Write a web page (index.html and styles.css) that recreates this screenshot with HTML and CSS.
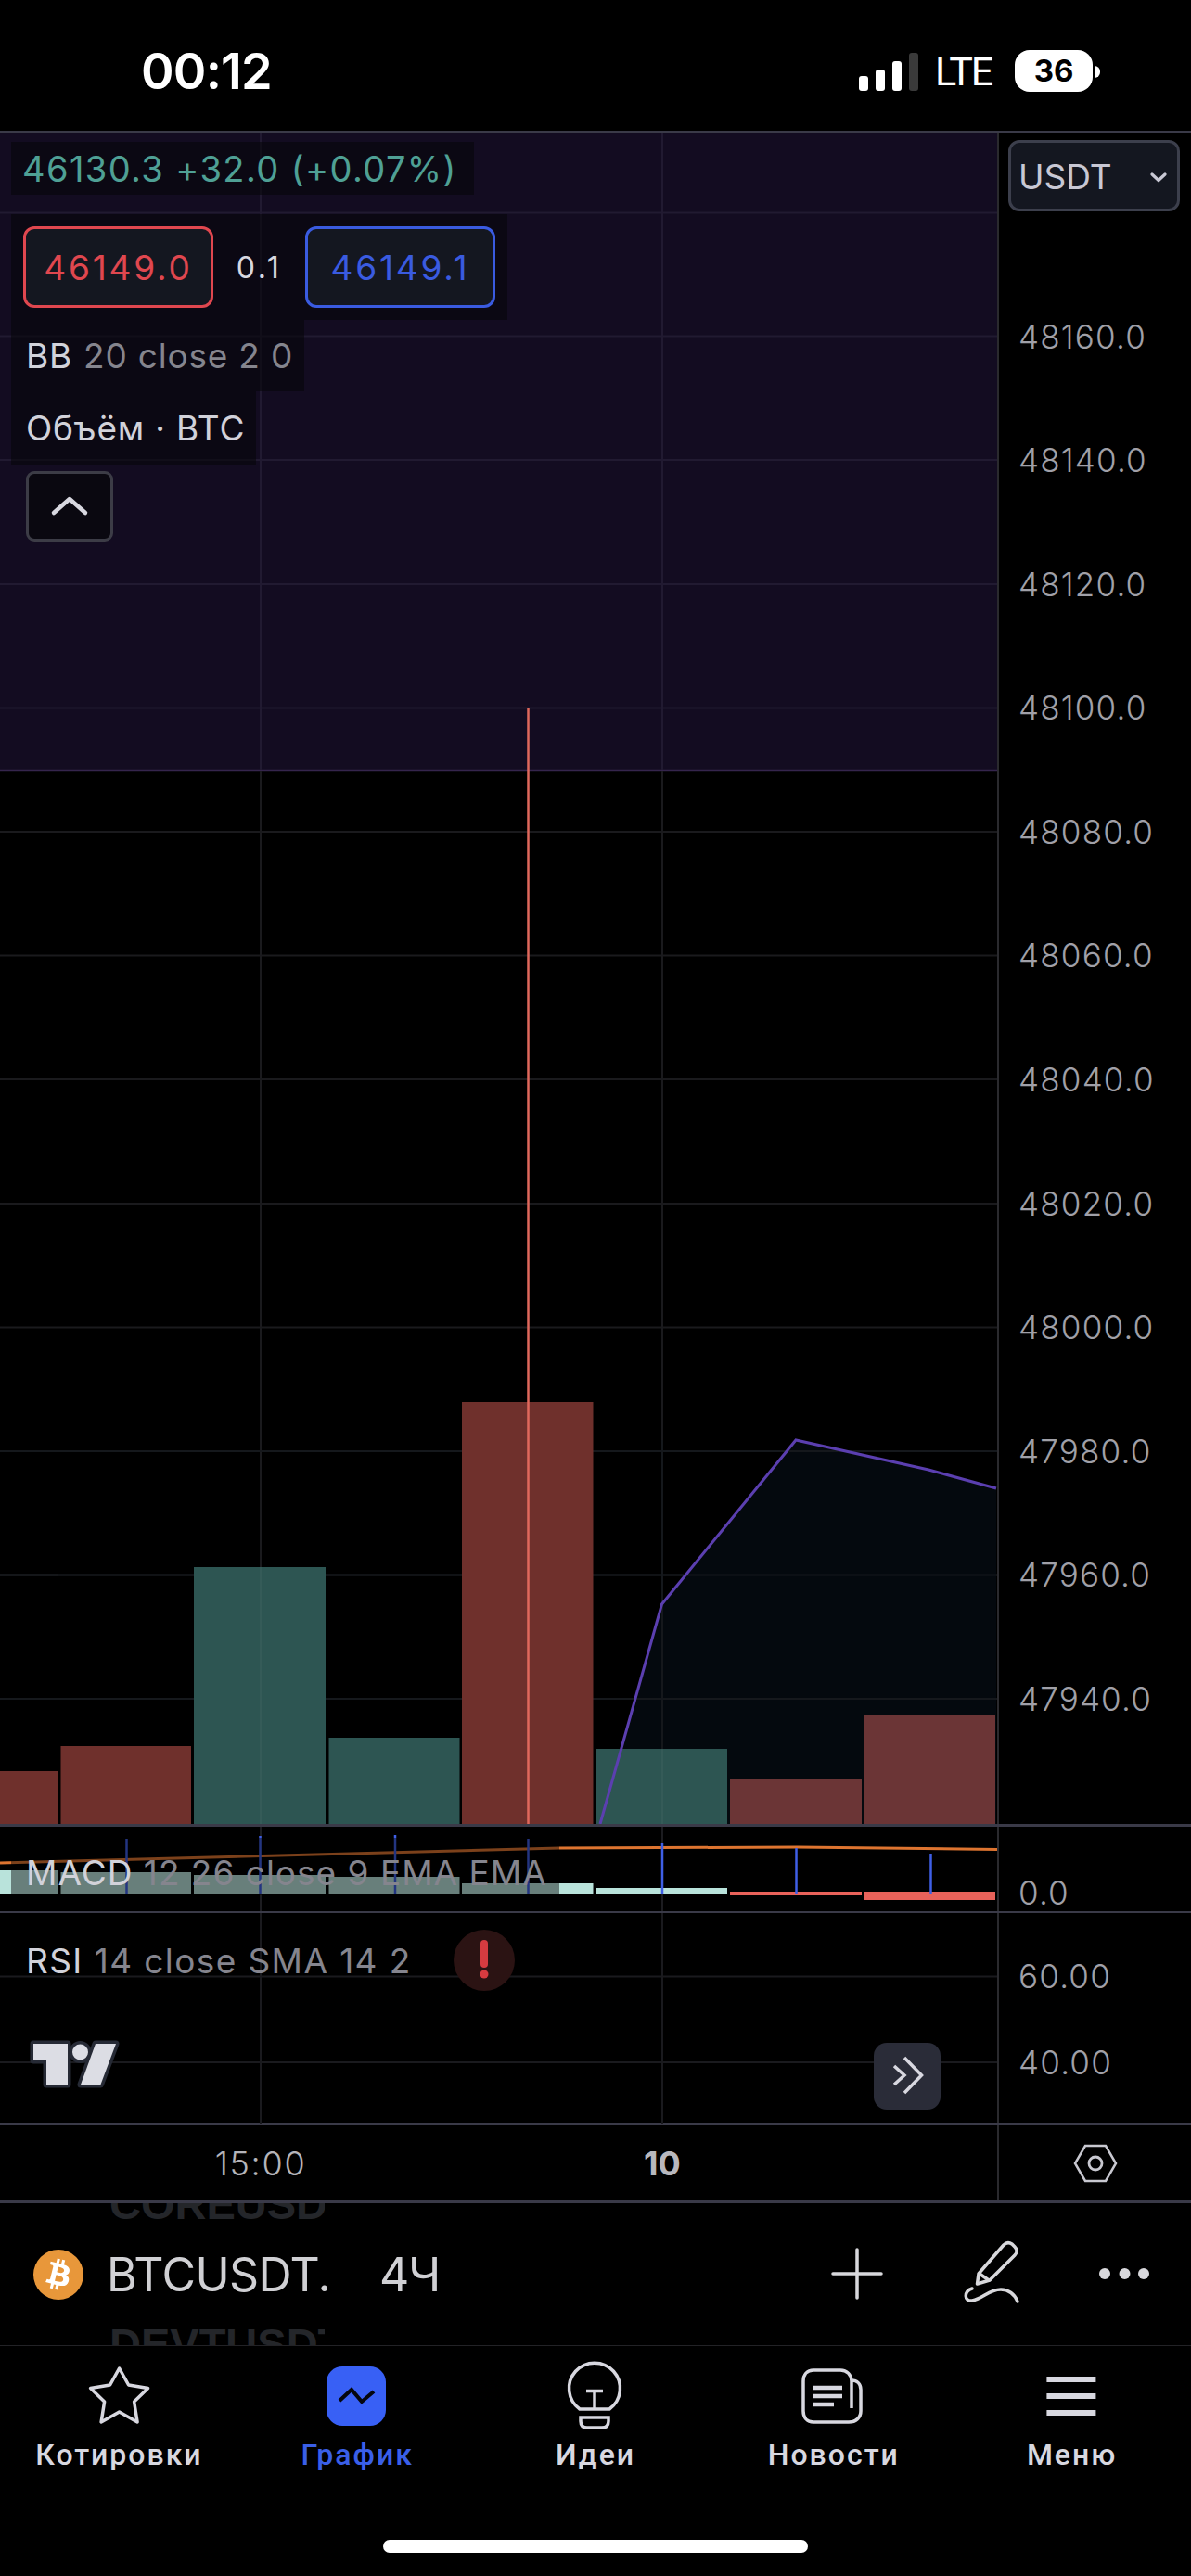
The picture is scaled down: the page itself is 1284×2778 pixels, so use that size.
FILE: index.html
```html
<!DOCTYPE html>
<html lang="ru">
<head>
<meta charset="utf-8">
<title>BTCUSDT</title>
<link rel="stylesheet" href="styles.css">
</head>
<body>
<div class="app">
  <header class="status">
    <span class="clock">00:12</span>
    <div class="status-right">
      <svg class="signal" viewBox="925 50 66 50" width="66" height="50">
        <rect x="926" y="80" width="10" height="16" rx="3" fill="#fff"/>
        <rect x="944" y="73" width="10" height="23" rx="3" fill="#fff"/>
        <rect x="962" y="64" width="10" height="32" rx="3" fill="#fff"/>
        <rect x="980" y="55" width="10" height="41" rx="3" fill="#3a3a3a"/>
      </svg>
      <span class="lte">LTE</span>
      <span class="battery">36</span>
      <span class="nub"></span>
    </div>
  </header>

  <section class="row row-main">
    <div class="pane pane-main">
      <svg class="canvas" viewBox="0 143 1075 1824" width="1075" height="1824">
        <rect x="0" y="143" width="1075" height="688" fill="#130c21"/>
        <path d="M0 830.5H1075" stroke="#35254d" stroke-width="1.5"/>
        <g class="grid-purple">
          <path d="M0 229.5H1075M0 362.5H1075M0 496H1075M0 630H1075M0 763.5H1075M281 143V830M714 143V830"/>
        </g>
        <g class="grid-dark">
          <path d="M0 897H1075M0 1030.5H1075M0 1164H1075M0 1298H1075M0 1431.5H1075M0 1565H1075M0 1698.5H1075M0 1832H1075M281 831V1967M714 831V1967"/>
        </g>
        <polygon points="647,1967 713.5,1730 858,1553 1001,1585 1074,1605 1074,1967" fill="#04090e"/>
        <path d="M0 1565H1075M0 1698.5H1075M0 1832H1075M714 1553V1967" stroke="#15181c" stroke-width="2" fill="none"/>
        <g class="bars-red">
          <rect x="0" y="1910" width="62" height="57"/>
          <rect x="65.5" y="1883" width="140.5" height="84"/>
          <rect x="498" y="1512" width="141.5" height="455"/>
        </g>
        <g class="bars-teal">
          <rect x="209" y="1690" width="142" height="277"/>
          <rect x="354.5" y="1874" width="141" height="93"/>
          <rect x="643" y="1886" width="141" height="81"/>
        </g>
        <g class="bars-maroon">
          <rect x="787" y="1918" width="142" height="49"/>
          <rect x="932" y="1849" width="141" height="118"/>
        </g>
        <path d="M569.5 763V1967" stroke="#e0685c" stroke-width="2.5"/>
        <path d="M281 1690V1967M714 1886V1967M0 1698.5H62" stroke="#ffffff" stroke-opacity=".04" stroke-width="2" fill="none"/>
        <polyline points="647,1967 713.5,1730 858,1553 1001,1585 1074,1605" fill="none" stroke="#5b3fb0" stroke-width="3"/>
      </svg>
      <div class="legend">
        <div class="leg-row leg-price"><span class="teal">46130.3 +32.0 (+0.07%)</span></div>
        <div class="leg-row leg-quotes">
          <span class="quote quote-sell">46149.0</span>
          <span class="spread">0.1</span>
          <span class="quote quote-buy">46149.1</span>
        </div>
        <div class="leg-row leg-bb"><span class="name">BB</span> <span class="args">20 close 2 0</span></div>
        <div class="leg-row leg-vol"><span class="name">Объём · BTC</span></div>
        <button class="collapse" type="button">
          <svg viewBox="0 0 46 24" width="46" height="24"><path d="M6 19L23 4L40 19" fill="none" stroke="#d8d8e0" stroke-width="4.5" stroke-linecap="round" stroke-linejoin="round"/></svg>
        </button>
      </div>
    </div>
    <aside class="axis axis-main">
      <div class="currency">
        <span>USDT</span>
        <svg viewBox="0 0 18 12" width="18" height="12"><path d="M2 3L9 9.5L16 3" fill="none" stroke="#c8c8d4" stroke-width="3.2" stroke-linecap="round" stroke-linejoin="round"/></svg>
      </div>
      <ul class="ticks">
        <li>48160.0</li><li>48140.0</li><li>48120.0</li><li>48100.0</li><li>48080.0</li>
        <li>48060.0</li><li>48040.0</li><li>48020.0</li><li>48000.0</li><li>47980.0</li>
        <li>47960.0</li><li>47940.0</li>
      </ul>
    </aside>
  </section>

  <section class="row row-macd">
    <div class="pane pane-macd">
      <svg class="canvas" viewBox="0 1970 1075 91" width="1075" height="91">
        <path d="M281 1970V2061M714 1970V2061" stroke="#1c1c20" stroke-width="2"/>
        <polyline points="0,2009 603,1993 860,1992 1075,1994.5" fill="none" stroke="#dd7430" stroke-width="3"/>
        <g fill="#b9e3db">
          <rect x="0" y="2017" width="62" height="26"/>
          <rect x="65.5" y="2019" width="140.5" height="24"/>
          <rect x="209" y="2022" width="142" height="21"/>
          <rect x="354.5" y="2024" width="141" height="19"/>
          <rect x="498" y="2031" width="141.5" height="12"/>
          <rect x="643" y="2036" width="141" height="7"/>
        </g>
        <g fill="#e8625a">
          <rect x="787" y="2040" width="142" height="4"/>
          <rect x="932" y="2040" width="141" height="9"/>
        </g>
        <path d="M136.5 1983V2043M280.5 1980V2043M426 1979V2043M569.5 1983V2043M714 1987V2043M858.5 1993V2043M1003.5 1999V2043" stroke="#3f5fe6" stroke-width="2.5"/>
      </svg>
      <div class="legend-macd"><span class="name">MACD</span> <span class="args">12 26 close 9 EMA EMA</span></div>
    </div>
    <aside class="axis axis-macd"><span class="tick-one">0.0</span></aside>
  </section>

  <section class="row row-rsi">
    <div class="pane pane-rsi">
      <svg class="canvas" viewBox="0 2063 1075 228" width="1075" height="228">
        <path d="M0 2131.5H1075M0 2224H1075M281 2063V2291M714 2063V2291" stroke="#1a1a1e" stroke-width="2"/>
      </svg>
      <div class="legend-rsi">
        <span class="name">RSI</span> <span class="args">14 close SMA 14 2</span>
        <span class="alert">
          <svg viewBox="0 0 66 66" width="66" height="66"><circle cx="33" cy="33" r="33" fill="#2b1313"/><path d="M33 15V37" stroke="#d63b40" stroke-width="8" stroke-linecap="round"/><circle cx="33" cy="48" r="4.5" fill="#d63b40"/></svg>
        </span>
      </div>
      <svg class="tv-logo" viewBox="30 2197 102 58" width="102" height="58">
        <g fill="#dcdde4" stroke="#262a35" stroke-width="7" paint-order="stroke" stroke-linejoin="round">
          <path d="M36 2204H73V2248H50V2222H36Z"/>
          <circle cx="86.5" cy="2213" r="8.5"/>
          <path d="M103 2204H125L108.5 2248H87Z"/>
        </g>
      </svg>
      <button class="scroll-btn" type="button">
        <svg viewBox="0 0 72 72" width="72" height="72"><path d="M33 16L51.5 35L33 54M22 25L33 35L22 45" fill="none" stroke="#d8d8e0" stroke-width="3.5"/></svg>
      </button>
    </div>
    <aside class="axis axis-rsi"><span class="tick-rsi">60.00</span><span class="tick-rsi">40.00</span></aside>
  </section>

  <section class="row row-time">
    <div class="pane pane-time"><span class="time time-a">15:00</span><span class="time time-b">10</span></div>
    <aside class="axis axis-time">
      <svg viewBox="0 0 48 42" width="48" height="42"><polygon points="13,2 35,2 46,21 35,40 13,40 2,21" fill="none" stroke="#c8c8d0" stroke-width="2.5"/><circle cx="24" cy="21" r="7" fill="none" stroke="#c8c8d0" stroke-width="2.8"/></svg>
    </aside>
  </section>

  <section class="symbol-bar">
    <span class="ghost ghost-top">COREUSD</span>
    <span class="ghost ghost-bottom">DEVTUSDT</span>
    <svg class="coin" viewBox="0 0 24 24" width="54" height="54">
      <circle cx="12" cy="12" r="12" fill="#e8973a"/>
      <path fill="#fff" fill-rule="evenodd" d="M17.288 10.291c.24-1.59-.974-2.45-2.64-3.03l.54-2.153-1.315-.33-.525 2.107c-.345-.087-.705-.167-1.064-.25l.526-2.127-1.32-.33-.54 2.165c-.285-.067-.565-.132-.84-.2l-1.815-.45-.35 1.407s.975.225.955.236c.535.136.63.486.615.766l-1.477 5.92c-.075.166-.24.406-.614.314.015.02-.96-.24-.96-.24l-.66 1.51 1.71.426.93.242-.54 2.19 1.32.327.54-2.17c.36.1.705.19 1.05.273l-.51 2.154 1.32.33.545-2.19c2.24.427 3.93.257 4.64-1.774.57-1.637-.03-2.58-1.217-3.196.854-.193 1.5-.76 1.68-1.93h.01zm-3.01 4.22c-.404 1.64-3.157.75-4.05.53l.72-2.9c.896.23 3.757.67 3.33 2.37zm.41-4.24c-.37 1.49-2.662.735-3.405.55l.654-2.64c.744.18 3.137.524 2.75 2.084v.006z"/>
    </svg>
    <span class="symbol">BTCUSDT.</span>
    <span class="interval">4Ч</span>
    <div class="actions">
      <svg viewBox="890 2412 68 80" width="68" height="80"><path d="M924 2425V2477M898 2451H950" stroke="#d8d8dc" stroke-width="3.5" stroke-linecap="round"/></svg>
      <svg viewBox="1030 2412 80 80" width="80" height="80">
        <g fill="none" stroke="#d8d8dc" stroke-width="3.5" stroke-linecap="round" stroke-linejoin="round">
          <path d="M1053.5 2462L1055 2451L1082 2420C1085 2417 1088 2417 1091 2419L1094 2422C1097 2425 1097 2428 1094 2431L1067 2458Z"/>
          <path d="M1056 2451L1066 2458"/>
          <path d="M1048 2467C1039 2470 1039 2481 1048 2480C1060 2478 1066 2468 1079 2468C1087 2468 1094 2473 1097 2481"/>
        </g>
      </svg>
      <svg viewBox="1180 2412 65 80" width="65" height="80"><g fill="#d8d8dc"><circle cx="1191" cy="2451" r="6"/><circle cx="1212.5" cy="2451" r="6"/><circle cx="1233" cy="2451" r="6"/></g></svg>
    </div>
  </section>

  <nav class="tabs">
    <a class="tab">
      <svg viewBox="88.4 2545 80 72" width="80" height="72"><polygon points="129,2554 139,2572 160,2575.5 145,2590 148.5,2612 129,2601 109.5,2612 113,2590 98,2575.5 119,2572" fill="none" stroke="#d8d8e0" stroke-width="3.5" stroke-linejoin="round"/></svg>
      <span>Котировки</span>
    </a>
    <a class="tab tab-active">
      <svg viewBox="345 2545 80 72" width="80" height="72"><rect x="352" y="2552" width="64" height="64" rx="17" fill="#3860f5"/><path d="M366 2589L379 2577L390 2590L403 2579" fill="none" stroke="#05070f" stroke-width="4"/></svg>
      <span>График</span>
    </a>
    <a class="tab">
      <svg viewBox="602 2545 80 72" width="80" height="72">
        <g fill="none" stroke="#d8d8e0" stroke-width="3.5">
          <path d="M625 2598A27.5 27.5 0 1 1 657 2598Z"/>
          <path d="M632 2578.5H650M641 2578.5V2598"/>
          <path d="M626 2607H656V2611C656 2616 653 2618 649 2618H633C629 2618 626 2616 626 2611Z"/>
        </g>
      </svg>
      <span>Идеи</span>
    </a>
    <a class="tab">
      <svg viewBox="859 2545 80 72" width="80" height="72">
        <g fill="none" stroke="#d8d8e0" stroke-width="3.5">
          <path d="M918 2597V2568C918 2561 913 2556 906 2556H877C870 2556 866 2561 866 2568V2600C866 2607 870 2612 877 2612H915C923 2612 928 2607 928 2600V2577C928 2571 924 2567 918 2567"/>
        </g>
        <path d="M877 2575H908M877 2584H908M877 2593H899" stroke="#d8d8e0" stroke-width="4.5"/>
      </svg>
      <span>Новости</span>
    </a>
    <a class="tab">
      <svg viewBox="1115.6 2545 80 72" width="80" height="72"><path d="M1128 2566H1181M1128 2584H1181M1128 2602H1181" stroke="#d8d8e0" stroke-width="6"/></svg>
      <span>Меню</span>
    </a>
  </nav>
  <div class="home-wrap"><span class="home"></span></div>
</div>
</body>
</html>
```

FILE: styles.css
```css
* { box-sizing: border-box; }
html, body { margin: 0; padding: 0; background: #000; }
body { font-family: Inter, "Noto Sans", sans-serif; color: #d8d8e0; }
ul { list-style: none; margin: 0; padding: 0; }
button { padding: 0; margin: 0; font: inherit; cursor: pointer; }
svg { display: block; }

.app { width: 1284px; height: 2778px; background: #000; overflow: hidden; display: flex; flex-direction: column; }

/* status bar */
.status { height: 141px; padding: 12px 106px 0 152px; display: flex; align-items: center; justify-content: space-between; }
.clock { font-size: 54px; font-weight: 600; color: #fff; letter-spacing: -.8px; line-height: 60px; }
.status-right { display: flex; align-items: center; position: relative; }
.signal { margin-right: 17px; }
.lte { font-family: Roboto, sans-serif; font-size: 43px; line-height: 50px; color: #fff; letter-spacing: -2.2px; width: 86px; }
.battery { width: 84px; height: 45px; border-radius: 16px; background: #fff; color: #000; font-weight: 700; font-size: 33px; line-height: 45px; text-align: center; }
.nub { position: absolute; right: -8px; top: 19px; width: 6px; height: 13px; background: #fff; border-radius: 0 6px 6px 0; }

/* rows */
.row { display: flex; border-top: 2px solid #3a3a48; }
.pane { width: 1075px; position: relative; flex: none; }
.canvas { position: absolute; left: 0; top: 0; }
.axis { flex: 1; border-left: 2px solid #2a2a2e; min-width: 0; }
.row-main { height: 1826px; }
.row-macd { height: 94px; border-top-width: 3px; }
.row-rsi { height: 229px; border-top-width: 2px; }
.row-time { height: 83px; border-top-width: 2px; }

.grid-purple path { stroke: #211a31; stroke-width: 2; fill: none; }
.grid-dark path { stroke: #1a1a1d; stroke-width: 2; fill: none; }
.bars-red { fill: #6f302c; }
.bars-teal { fill: #2d5552; }
.bars-maroon { fill: #6b3536; }

/* legends */
.legend { position: absolute; left: 12px; top: 10px; display: flex; flex-direction: column; align-items: flex-start; }
.leg-row { background: rgba(6, 6, 10, .6); display: flex; align-items: center; font-size: 37px; letter-spacing: .8px; font-weight: 400; white-space: nowrap; }
.leg-price { width: 499px; height: 57px; padding-left: 12px; margin-bottom: 21px; font-size: 38px; letter-spacing: 1.4px; }
.leg-quotes { width: 535px; height: 114px; padding-left: 13px; }
.leg-bb { width: 316px; height: 77px; padding-left: 16px; gap: 12px; }
.leg-vol { width: 264px; height: 79px; padding-left: 16px; }
.teal { color: #4fa095; }
.name { color: #d2d2da; }
.args { color: #85858e; }
.quote { width: 205px; height: 88px; border: 3px solid; border-radius: 12px; background: #141720; display: flex; align-items: center; justify-content: center; letter-spacing: 2.8px; }
.quote-sell { color: #e0474f; border-color: #e0474f; }
.quote-buy { color: #3a5be0; border-color: #3a5be0; }
.spread { width: 99px; text-align: center; font-size: 32px; color: #d8d8e0; letter-spacing: 3.5px; }
.collapse { margin: 7px 0 0 16px; width: 94px; height: 76px; background: #0a0810; border: 3px solid #3c3c46; border-radius: 9px; display: flex; align-items: center; justify-content: center; }

.legend-macd { position: absolute; left: 12px; top: 12px; width: 591px; height: 62px; padding: 20px 0 0 16px; background: rgba(0, 0, 0, .44); font-size: 37px; line-height: 36px; white-space: nowrap; letter-spacing: 1px; }
.legend-rsi { position: absolute; left: 28px; top: 18px; height: 66px; display: flex; align-items: center; font-size: 37px; gap: 12px; white-space: nowrap; letter-spacing: 1.4px; }
.alert { margin-left: 33px; }
.tv-logo { position: absolute; left: 30px; top: 134px; }
.scroll-btn { position: absolute; left: 942px; top: 140px; width: 72px; height: 72px; border: 0; border-radius: 14px; background: #2a2c38; }

/* price axes */
.axis-main { padding: 8px 10px 0 10px; }
.currency { width: 185px; height: 77px; padding: 2px 11px 0 8px; border: 3px solid #3c3f4c; border-radius: 12px; background: #141720; display: flex; align-items: center; justify-content: space-between; font-size: 37px; color: #c8c8d4; }
.ticks { margin-top: 68.5px; padding-left: 11px; }
.ticks li { height: 133.6px; line-height: 133.6px; font-size: 35px; letter-spacing: 1.2px; color: #a0a0a8; font-weight: 300; }
.axis-macd { padding: 51px 0 0 21px; }
.tick-one { display: block; font-size: 35px; line-height: 40px; letter-spacing: 1.2px; color: #a0a0a8; font-weight: 300; }
.axis-rsi { padding: 48px 0 0 21px; }
.tick-rsi { display: block; height: 92.5px; line-height: 40px; font-size: 35px; letter-spacing: 1.2px; color: #a0a0a8; font-weight: 300; }
.axis-time { display: flex; align-items: center; padding-left: 80px; }

.pane-time { display: flex; align-items: center; padding-left: 231px; }
.time { width: 100px; text-align: center; font-size: 36px; color: #b4b4ba; font-weight: 300; letter-spacing: 1.7px; }
.time-b { margin-left: 333px; font-weight: 700; color: #b8b8be; letter-spacing: 0; }

/* symbol bar */
.symbol-bar { position: relative; height: 157px; border-top: 3px solid #3a3a48; border-bottom: 1px solid #222226; display: flex; align-items: center; overflow: hidden; padding-left: 36px; }
.coin { flex: none; }
.symbol { margin-left: 25px; width: 294px; font-size: 50px; letter-spacing: -.6px; color: #d0d0d4; white-space: nowrap; }
.interval { font-size: 50px; color: #d0d0d4; letter-spacing: -1px; }
.actions { margin-left: auto; margin-right: 39px; display: flex; align-items: center; gap: 72px; }
.actions svg + svg + svg { margin-left: -2px; }
.ghost { position: absolute; left: 118px; width: 232px; overflow: hidden; font-family: "Liberation Sans", sans-serif; font-weight: 700; font-size: 47px; line-height: 56px; color: #24262a; white-space: nowrap; }
.ghost-top { top: -27px; }
.ghost-bottom { top: 124px; }

/* tabs */
.tabs { display: grid; grid-template-columns: repeat(5, 1fr); padding-top: 15px; height: 205px; }
.tab { display: flex; flex-direction: column; align-items: center; font-family: Roboto, sans-serif; font-size: 32px; font-weight: 500; letter-spacing: 2px; color: #d8d8e0; line-height: 40px; }
.tab svg { height: 72px; margin-bottom: 10px; overflow: visible; }
.tab-active { color: #3a5fe8; }
.home-wrap { flex: 1; display: flex; justify-content: center; }
.home { width: 458px; height: 14px; border-radius: 7px; background: #fff; margin-top: 4px; }
```
